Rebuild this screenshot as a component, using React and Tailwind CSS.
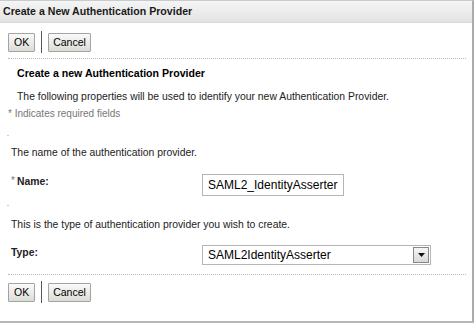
import React from 'react';

const font = { fontFamily: 'Tahoma, "Liberation Sans", Arial, sans-serif' };

const Buttons = () => (
  <div className="flex items-center h-[22px]">
    <button className="h-[19px] px-[5px] text-[10.5px] leading-none text-black bg-gradient-to-b from-[#fafafa] to-[#dcdcd6] border border-[#a3a3a3] rounded-[1px]">
      OK
    </button>
    <div className="w-px h-[22px] bg-[#555] mx-[6px]" />
    <button className="h-[19px] px-[4px] text-[10.5px] leading-none text-black bg-gradient-to-b from-[#fafafa] to-[#dcdcd6] border border-[#a3a3a3] rounded-[1px]">
      Cancel
    </button>
  </div>
);

export default function App() {
  return (
    <div className="w-[476px] h-[325px] bg-white text-[#222] text-[10.4px]" style={font}>
      <div className="w-[474px] h-[323px] border-t border-r-[2px] border-b-[2px] border-t-[#c8cbcd] border-r-[#a9acaf] border-b-[#b4b6b8] flex flex-col">
        {/* header */}
        <div className="h-[22px] flex items-center px-[3px] bg-gradient-to-b from-[#f4f5f4] to-[#e3e4e2] border-b border-[#d8d9d7]">
          <span className="font-bold text-[10.6px] text-[#1a1a1a]">Create a New Authentication Provider</span>
        </div>

        <div className="px-[8px] pt-[8px]">
          <Buttons />
          <div className="mt-[5px] w-[458px] border-t border-dotted border-[#b8b8b8]" />

          <div className="pl-[9px] pt-[7px]">
            <div className="font-bold text-[10.6px] text-black leading-[14px]">Create a new Authentication Provider</div>
            <div className="mt-[10px] leading-[14px] text-[#222]">
              The following properties will be used to identify your new Authentication Provider.
            </div>
          </div>
          <div className="mt-[3px] leading-[14px] text-[10px] text-[#777]">* Indicates required fields</div>

          <div className="mt-[14px] -ml-[1px] w-[2px] border-t border-[#ccc]" />
          <div className="pl-[3px] mt-[10px] leading-[14px]">The name of the authentication provider.</div>

          <div className="flex items-start mt-[14px] pl-[3px]">
            <div className="w-[191px] flex items-start pt-[1px]">
              <span className="text-[10px] text-[#777] mr-[2px] leading-[12px]">*</span>
              <span className="font-bold leading-[14px]">Name:</span>
            </div>
            <div className="w-[142px] h-[22px] border border-[#b5b5b5] flex items-center px-[5px] text-[12px] text-black">
              SAML2_IdentityAsserter
            </div>
          </div>

          <div className="mt-[9px] -ml-[1px] w-[2px] border-t border-[#ccc]" />
          <div className="pl-[3px] mt-[12px] leading-[14px]">This is the type of authentication provider you wish to create.</div>

          <div className="flex items-start mt-[13px] pl-[3px]">
            <div className="w-[191px] pt-[1px] font-bold leading-[14px]">Type:</div>
            <div className="w-[229px] h-[20px] border border-[#b5b5b5] flex items-center text-[12px] text-black">
              <span className="flex-1 pl-[5px]">SAML2IdentityAsserter</span>
              <div className="w-[16px] h-[16px] mr-[1px] border border-[#888] bg-gradient-to-b from-[#f6f6f6] to-[#d8d8d8] flex items-center justify-center">
                <svg width="7" height="4" viewBox="0 0 7 4"><path d="M0 0h7L3.5 4z" fill="#111" /></svg>
              </div>
            </div>
          </div>

          <div className="mt-[9px] w-[458px] border-t border-dotted border-[#b8b8b8]" />
          <div className="mt-[6px]">
            <Buttons />
          </div>
        </div>
      </div>
    </div>
  );
}
